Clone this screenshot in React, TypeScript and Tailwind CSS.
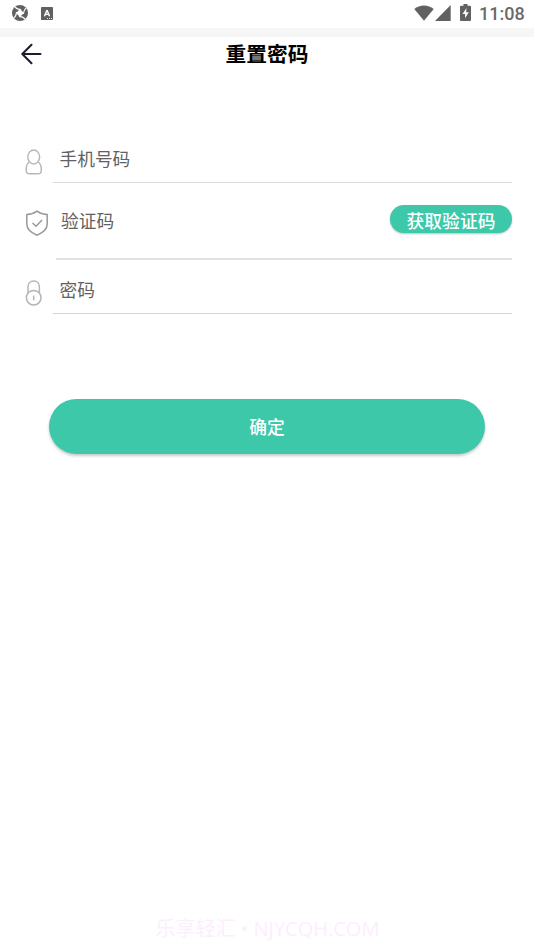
import React from "react";

function StatusBar() {
  return (
    <div className="flex h-7 shrink-0 items-start pl-[12px] pr-[9px] text-[#616161]">
      <svg className="mt-[5px] size-4 shrink-0" viewBox="0 0 16 16">
        <circle cx="8" cy="8" r="8" fill="#616161" />
        <path d="M8 4 12 8 8 12 4 8z" fill="#fff" />
        <g fill="none" stroke="#fff" strokeWidth="1.200">
          <path d="M9 4.600C6.500 4.400 4.300 3.500 2.800 2" />
          <path d="M9 4.600C6.500 4.400 4.300 3.500 2.800 2" transform="rotate(90 8 8)" />
          <path d="M9 4.600C6.500 4.400 4.300 3.500 2.800 2" transform="rotate(180 8 8)" />
          <path d="M9 4.600C6.500 4.400 4.300 3.500 2.800 2" transform="rotate(270 8 8)" />
        </g>
      </svg>
      <svg className="ml-[13px] mt-[7px] h-[13px] w-3 shrink-0" viewBox="0 0 12 13">
        <rect width="12" height="13" rx="0.8" fill="#616161" />
        <path d="M2.700 9.200 5.200 3h1.600l2.500 6.200H7.700l-.5-1.300H4.800l-.5 1.300zM5.300 6.800h1.400L6 4.800z" fill="#fff" />
        <path d="M6 11.500h5" stroke="#fff" strokeWidth="0.800" strokeDasharray="1 1" />
      </svg>
      <div className="grow" />
      <svg className="mt-[5px] h-4 w-5 shrink-0" viewBox="0 0 20 16">
        <path d="M.3 4C5.700-.8 14.300-.8 19.700 4L10 15.700z" fill="#616161" />
      </svg>
      <svg className="ml-px mt-[5px] size-4 shrink-0" viewBox="0 0 16 16">
        <path d="M15.700 0v16H0z" fill="#616161" />
      </svg>
      <svg className="ml-[9px] mt-1 h-[17px] w-[11px] shrink-0" viewBox="0 0 11 17">
        <path d="M3.500 0h4v1.700H10a1 1 0 0 1 1 1V16a1 1 0 0 1-1 1H1a1 1 0 0 1-1-1V2.700a1 1 0 0 1 1-1h2.500z" fill="#616161" />
        <path d="M6.500 4 2.500 10h2.600v4.300l3.700-6H6.100z" fill="#fff" />
      </svg>
      <span className="ml-[8px] mt-1 w-[46px] whitespace-nowrap font-['Roboto',sans-serif] text-[18px] font-medium leading-5 text-[#6a6a6a]">11:08</span>
    </div>
  );
}

function UserIcon() {
  return (
    <svg className="mt-[9px] h-[26px] w-[18px] shrink-0" viewBox="0 0 18 26" fill="none" stroke="#b8b8b8" strokeWidth="1.500">
      <ellipse cx="8.700" cy="8" rx="5.900" ry="6.900" />
      <path d="M4.300 13C2.200 14.600 1.200 17 1.200 20v1.500c0 2 1.200 3.300 3.200 3.300h8.700c2 0 3.200-1.300 3.200-3.300V20c0-3-1-5.400-3.100-7" />
    </svg>
  );
}

function ShieldIcon() {
  return (
    <svg className="mt-[10px] h-[26px] w-6 shrink-0" viewBox="0 0 24 26" fill="none" stroke="#999" strokeWidth="1.500">
      <path d="M12 1.200c2.800 2.100 6.100 3.200 10.200 3.400V14c0 5.500-4.500 8.800-10.200 11.200C6.300 22.800 1.800 19.500 1.800 14V4.600C5.900 4.400 9.200 3.300 12 1.200z" />
      <path d="m7.500 13 3.500 3.300 6-6.300" />
    </svg>
  );
}

function LockIcon() {
  return (
    <svg className="mt-[9px] h-[26px] w-[18px] shrink-0" viewBox="0 0 18 26" fill="none" stroke="#b5b5b5" strokeWidth="1.500">
      <circle cx="8.700" cy="17.700" r="7.300" />
      <path d="M3 13V7c0-3.500 2.200-6 5.700-6s5.700 2.500 5.700 6v6M8.700 15.500v4.800" />
    </svg>
  );
}

export default function App() {
  return (
    <main className="flex h-[950px] w-[534px] flex-col bg-white font-['Noto_Sans_CJK_SC',sans-serif]">
      <StatusBar />
      <div className="h-[9px] shrink-0 bg-[#f6f6f6]" />
      <header className="grid h-[34px] shrink-0 grid-cols-[1fr_auto_1fr] items-center">
        <svg className="ml-[21px] h-[22px] w-[22px]" viewBox="0 0 22 22" fill="none" stroke="#1c1c2e" strokeWidth="2" strokeLinecap="round" strokeLinejoin="round">
          <path d="M19.500 11H1.500M10.500 1.800 1.300 11l9.200 9.200" />
        </svg>
        <h1 className="pb-[2px] text-[20.700px] font-bold leading-[32px] text-black">重置密码</h1>
        <span />
      </header>

      <form className="flex flex-col pr-[22px] pt-[69px]">
        <label className="flex h-[43px] pl-[25px]">
          <UserIcon />
          <span className="ml-[10px] grow border-b border-[#d9d9d9] pl-[6.500px] pt-[5px] text-[17.700px] leading-[26px] text-[#616161]">手机号码</span>
        </label>
        <div className="mt-[17px] flex h-[60px] pl-[25px]">
          <ShieldIcon />
          <div className="ml-[7px] flex grow items-start justify-between border-b-2 border-[#e2e2e2] pl-[5px]">
            <span className="pt-[7px] text-[17.700px] leading-[26px] text-[#616161]">验证码</span>
            <button type="button" className="mt-[5px] h-7 w-[122px] rounded-full bg-[#3ec8aa] pt-px text-[17.800px] font-medium leading-[28px] text-white shadow-[0_1px_2px_rgba(0,0,0,0.25)]">获取验证码</button>
          </div>
        </div>
        <label className="mt-[11px] flex h-[43px] pl-[25px]">
          <LockIcon />
          <span className="ml-[10px] grow border-b border-[#d4d4d4] pl-[6.500px] pt-[5px] text-[17.700px] leading-[26px] text-[#616161]">密码</span>
        </label>
      </form>

      <button type="button" className="mx-[49px] mt-[85px] h-[55px] shrink-0 rounded-full bg-[#3ec8aa] text-[17.800px] font-medium leading-[55px] text-white shadow-[0_2px_3px_rgba(0,0,0,0.22)]">确定</button>

      <footer className="mt-auto flex h-[42px] items-center justify-center whitespace-nowrap pl-px font-['Open_Sans','Noto_Sans_CJK_SC',sans-serif] text-[20px] leading-[30px] text-[#fdeefd]">乐享轻汇 • NJYCQH.COM</footer>
    </main>
  );
}
